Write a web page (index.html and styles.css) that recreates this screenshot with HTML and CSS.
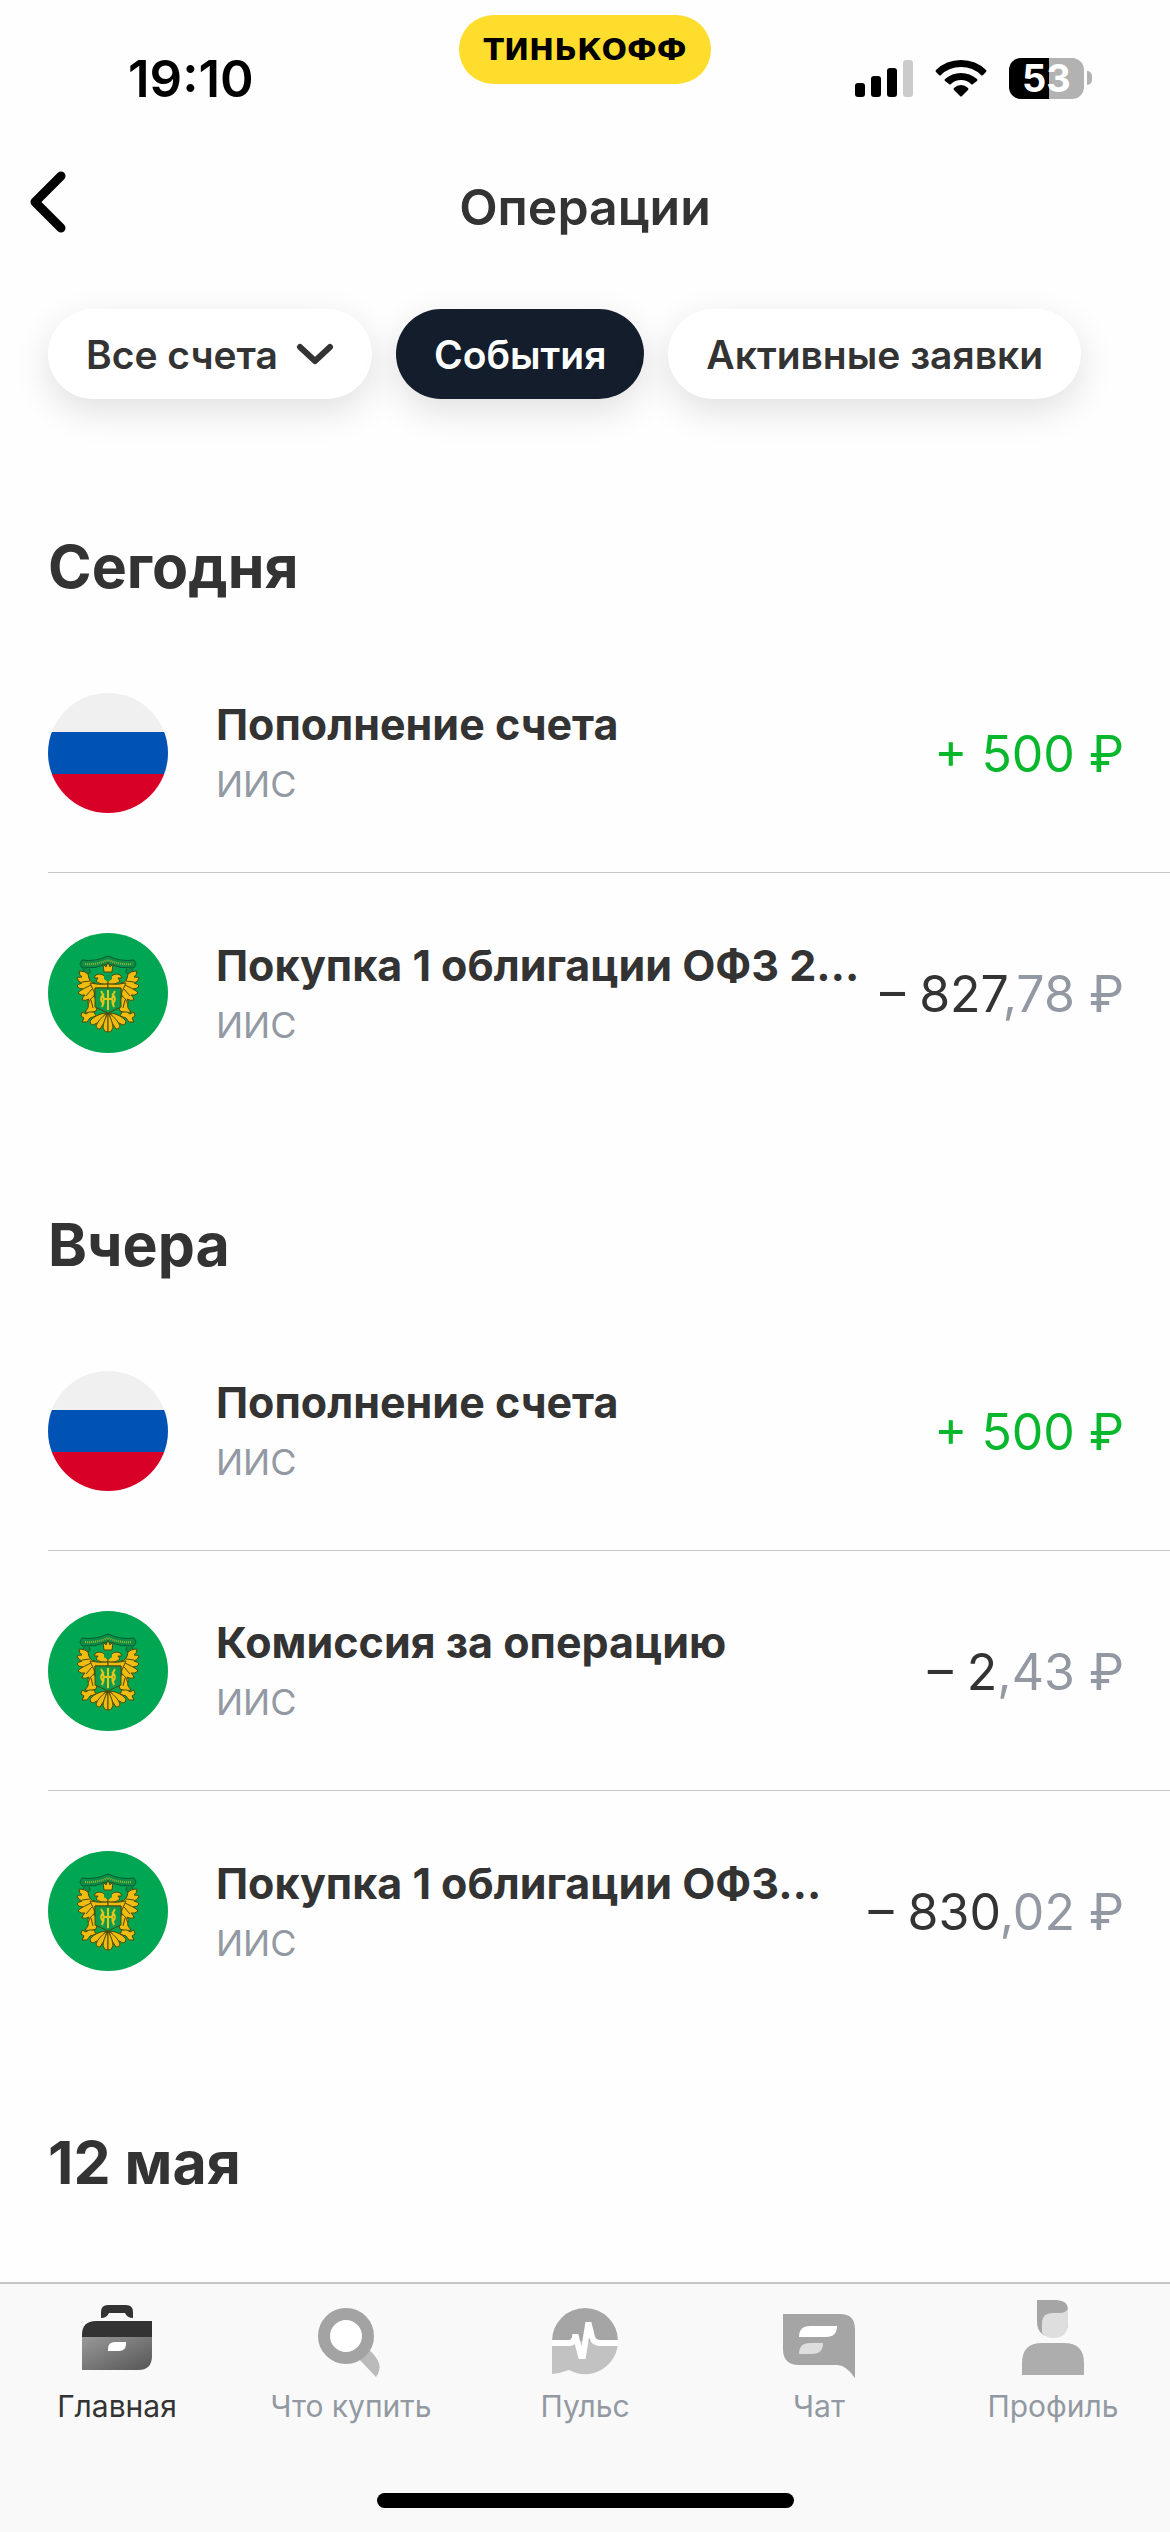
FILE: index.html
```html
<!DOCTYPE html>
<html lang="ru">
  <head>
    <meta charset="UTF-8" />
    <meta name="viewport" content="width=device-width, initial-scale=1.0" />
    <title>Операции</title>
    <link rel="stylesheet" href="styles.css">
  </head>
  <body>
    <svg class="defs" aria-hidden="true">
      <!-- half of the eagle, mirrored inside the emblem -->
      <symbol id="wing" viewBox="0 0 120 120">
        <g fill="#f0bc10" stroke="#4d4a0c" stroke-width="1" stroke-linejoin="round">
          <path d="M60 48q-3-7-9-7q-4 0-5 4l4 0-2 3q4 4 12 3z" />
          <path d="M47 50q-6 0-7-9q-3-3-9-3 0 4 3 6-4 0-5 1 1 4 5 5-4 1-5 3 2 3 6 3-4 2-5 4 3 3 7 2-3 3-3 5 4 1 7-1-2 3-1 5 4-1 6-5z" />
          <path d="M42 50q8 2 18 1v4H47v6z" />
          <path d="M46 63q-6 4-6 12l-3 4q6 2 11-1 3-7-2-15z" />
          <path d="M46 79q-6-1-8 2l-4-2-1 4 3 2-2 4 5 0 3-4 6-2z" />
          <path d="M58 80q-10 1-16 8 0 4 3 4 8-3 13-12z" />
          <path d="M59 80q-9 7-11 13 1 4 4 3 6-7 7-16z" />
          <path d="M60 80q-5 9-5 15 2 5 5 4z" />
        </g>
        <path d="M42 48l-8 1M43 52l-8 4M44 56l-6 7M43 67l2 8" fill="none" stroke="#4d4a0c" stroke-width="1" />
      </symbol>
      <!-- ministry emblem, reused in the bond rows -->
      <symbol id="emblem" viewBox="0 0 120 120">
        <circle cx="60" cy="60" r="60" fill="#00a651" />
        <g fill="#0a8f48" stroke="#0c5a32" stroke-width="1">
          <path d="M34 27q13 2 26-4q13 6 26 4l2 4-2 4q-13 1-26-4q-13 5-26 4l-2-4z" />
          <path d="M36 36q-2 4 3 5q5-1 2-5M84 36q2 4-3 5q-5-1-2-5" />
        </g>
        <path d="M37 31q11 1 23-4q12 5 23 4" fill="none" stroke="#a5b12c" stroke-width="2" stroke-dasharray="1 1" />
        <use href="#wing" width="120" height="120" />
        <use href="#wing" width="120" height="120" transform="matrix(-1 0 0 1 120 0)" />
        <path d="M55 31l3 3 2-5 2 5 3-3-1 8h-8z" fill="#f0bc10" stroke="#4d4a0c" stroke-width="1" />
        <path d="M56 42h8v4l-4 3-4-3z" fill="#0a9b4b" />
        <path d="M47 55h26v19l-13 6-13-6z" fill="#0a9b4b" stroke="#4d4a0c" stroke-width="1" />
        <path d="M53 58q5 7 1 16M67 58q-5 7-1 16M60 57v20M55 66h10M56 61q-6 5 0 10M64 61q6 5 0 10" fill="none" stroke="#e9c51a" stroke-width="2" />
      </symbol>
      <symbol id="flag" viewBox="0 0 120 120">
        <clipPath id="round"><circle cx="60" cy="60" r="60" /></clipPath>
        <g clip-path="url(#round)">
          <path fill="#f0f0f0" d="M0 0h120v39H0z" />
          <path fill="#0052b4" d="M0 39h120v42H0z" />
          <path fill="#d80027" d="M0 81h120v39H0z" />
        </g>
      </symbol>
    </svg>

    <div class="screen">
      <div class="status">
        <span class="time">19:10</span>
        <span class="brand">ТИНЬКОФФ</span>
        <div class="indicators">
          <svg width="58" height="37" viewBox="0 0 58 37">
            <rect x="0" y="23" width="10" height="14" rx="3" />
            <rect x="16" y="16" width="10" height="21" rx="3" />
            <rect x="32" y="8" width="10" height="29" rx="3" />
            <rect x="48" y="0" width="10" height="37" rx="3" fill="#cbcbcb" />
          </svg>
          <svg width="52" height="37" viewBox="0 0 52 37">
            <path d="M1 10Q11 0 26 0T51 10q1 1 0 2l-3 3q-1 1-2 0Q38 7 26 7T6 15q-1 1-2 0l-3-3q-1-1 0-2z" />
            <path d="M10 19q7-6 16-6t16 6q1 1 0 2l-4 3q-1 1-2 0-4-4-10-4t-10 4q-1 1-2 0l-4-3q-1-1 0-2z" />
            <path d="M19 28q3-3 7-3t7 3q1 1 0 2l-6 6q-1 1-2 0l-6-6q-1-1 0-2z" />
          </svg>
          <div class="battery"><span class="level">53</span></div>
        </div>
      </div>

      <header class="topbar">
        <button class="back" aria-label="Назад">
          <svg width="36" height="62" viewBox="0 0 36 62">
            <path d="M31 5L5 31l26 26" fill="none" stroke="#000" stroke-width="9" stroke-linecap="round" stroke-linejoin="round" />
          </svg>
        </button>
        <h1>Операции</h1>
      </header>

      <div class="filters">
        <button class="chip">
          Все счета
          <svg width="38" height="22" viewBox="0 0 38 22">
            <path d="M4 4l15 14L34 4" fill="none" stroke="#333" stroke-width="6" stroke-linecap="round" stroke-linejoin="round" />
          </svg>
        </button>
        <button class="chip active">События</button>
        <button class="chip">Активные заявки</button>
      </div>

      <main class="list">
        <section>
          <h2>Сегодня</h2>
          <ul>
            <li>
              <svg class="avatar"><use href="#flag" /></svg>
              <div class="info">
                <p class="name">Пополнение счета</p>
                <p class="account">ИИС</p>
              </div>
              <span class="sum plus">+ 500 ₽</span>
            </li>
            <li>
              <svg class="avatar"><use href="#emblem" /></svg>
              <div class="info">
                <p class="name">Покупка 1 облигации ОФЗ 2…</p>
                <p class="account">ИИС</p>
              </div>
              <span class="sum">– 827<span class="cents">,78 ₽</span></span>
            </li>
          </ul>
        </section>

        <section>
          <h2>Вчера</h2>
          <ul>
            <li>
              <svg class="avatar"><use href="#flag" /></svg>
              <div class="info">
                <p class="name">Пополнение счета</p>
                <p class="account">ИИС</p>
              </div>
              <span class="sum plus">+ 500 ₽</span>
            </li>
            <li>
              <svg class="avatar"><use href="#emblem" /></svg>
              <div class="info">
                <p class="name">Комиссия за операцию</p>
                <p class="account">ИИС</p>
              </div>
              <span class="sum">– 2<span class="cents">,43 ₽</span></span>
            </li>
            <li>
              <svg class="avatar"><use href="#emblem" /></svg>
              <div class="info">
                <p class="name">Покупка 1 облигации ОФЗ…</p>
                <p class="account">ИИС</p>
              </div>
              <span class="sum">– 830<span class="cents">,02 ₽</span></span>
            </li>
          </ul>
        </section>

        <section>
          <h2>12 мая</h2>
        </section>
      </main>

      <footer class="bottom">
        <nav class="tabs">
          <a class="tab current" href="#">
            <svg class="icon" viewBox="0 0 84 84">
              <defs>
                <linearGradient id="case" x1="0" y1="0" x2="1" y2="1">
                  <stop offset="0" stop-color="#999" />
                  <stop offset="1" stop-color="#555" />
                </linearGradient>
              </defs>
              <path d="M26 22v-6q0-7 7-7h18q7 0 7 7v6q-6 0-8-5H34q-2 5-8 5z" fill="#333" />
              <path d="M7 41v-2Q7 25 21 25h56v16z" fill="#333" />
              <path d="M7 41h70v19q0 14-14 14H7z" fill="url(#case)" />
              <path d="M33 55v-2q0-7 7-7h11v2q0 7-7 7z" fill="#fff" />
            </svg>
            Главная
          </a>
          <a class="tab" href="#">
            <svg class="icon" viewBox="0 0 84 84">
              <path d="M48 61l19 20Q77 68 59 53z" fill="#bbb" />
              <circle cx="37" cy="40" r="22" fill="#fff" stroke="#a3a3a3" stroke-width="12" />
            </svg>
            Что купить
          </a>
          <a class="tab" href="#">
            <svg class="icon" viewBox="0 0 84 84">
              <path d="M9 45a33 33 0 0 1 66 0z" fill="#a5a5a5" />
              <path d="M9 45h66A33 33 0 0 1 26 74q-8 3-17 4z" fill="#c2c2c2" />
              <path d="M9 47h17q5 0 6-6h1l5 19h2l5-31h1l3 12q2 6 8 6h18" fill="none" stroke="#fff" stroke-width="6" />
            </svg>
            Пульс
          </a>
          <a class="tab" href="#">
            <svg class="icon" viewBox="0 0 84 84">
              <path d="M6 18h57q15 0 15 15v49Q69 69 60 69H22Q6 69 6 53z" fill="#a5a5a5" />
              <path d="M22 41q0-11 11-11h27q0 11-11 11z" fill="#fff" />
              <path d="M22 58q0-11 11-11h13q0 11-11 11z" fill="#dedede" />
            </svg>
            Чат
          </a>
          <a class="tab" href="#">
            <svg class="icon" viewBox="0 0 84 84">
              <path d="M26 4h20q11 1 11 9v13q0 15-15 15-16 0-16-16z" fill="#a5a5a5" />
              <path d="M31 37V27q0-10 11-10h6q8 0 9-5v15q0 15-15 15-7 0-11-5z" fill="#dedede" />
              <path d="M11 79V67q0-20 20-20h22q20 0 20 20v12z" fill="#adadad" />
            </svg>
            Профиль
          </a>
        </nav>
        <div class="homebar"></div>
      </footer>
    </div>
  </body>
</html>
```
FILE: styles.css
```css
* {
  margin: 0;
  padding: 0;
  box-sizing: border-box;
}
body {
  font-family: Inter, "Liberation Sans", sans-serif;
  color: #333;
  background-color: #fefefe;
}
button {
  font: inherit;
  color: inherit;
  border: none;
  background: none;
}
.defs {
  position: absolute;
  width: 0;
  height: 0;
}
.screen {
  display: flex;
  flex-direction: column;
  min-height: 100vh;
}
.status {
  display: grid;
  grid-template-columns: 1fr auto 1fr;
  align-items: center;
  height: 156px;
  padding: 0 78px;
  color: #000;
}
.time {
  padding-left: 50px;
  font-size: 51px;
  font-weight: 600;
}
.brand {
  align-self: start;
  margin-top: 15px;
  padding: 0 24px;
  border-radius: 35px;
  background-color: #ffdd2d;
  font-family: "DejaVu Sans", sans-serif;
  font-size: 30px;
  font-weight: bold;
  line-height: 69px;
}
.indicators {
  display: flex;
  align-items: center;
  justify-content: flex-end;
  gap: 22px;
}
.battery {
  display: flex;
  align-items: center;
  gap: 3px;
}
.battery::after {
  content: "";
  width: 5px;
  height: 14px;
  border-radius: 0 6px 6px 0;
  background-color: #b2b2b2;
}
.level {
  width: 75px;
  height: 41px;
  border-radius: 12px;
  background: linear-gradient(to right, #000 53%, #b2b2b2 53%);
  color: #fff;
  font-size: 38px;
  font-weight: 700;
  line-height: 41px;
  text-align: center;
}
.topbar {
  display: grid;
  grid-template-columns: 1fr auto 1fr;
  align-items: center;
  height: 102px;
  padding: 0 30px;
}
.back {
  justify-self: start;
  height: 72px;
  padding-bottom: 6px;
}
h1 {
  font-size: 50px;
  font-weight: 600;
}
.filters {
  display: flex;
  gap: 24px;
  padding: 51px 48px 36px;
}
.chip {
  display: flex;
  align-items: center;
  gap: 18px;
  height: 90px;
  padding: 0 38px;
  border-radius: 45px;
  background-color: #fff;
  box-shadow: 0 12px 36px rgba(0, 0, 0, 0.12);
  font-size: 39px;
  font-weight: 600;
  white-space: nowrap;
}
.chip.active {
  background-color: #141d2b;
  color: #fff;
}
.list {
  flex: 1;
}
h2 {
  padding: 96px 48px 30px;
  font-size: 59px;
  font-weight: 700;
  line-height: 72px;
}
ul {
  list-style: none;
  padding-left: 48px;
}
li {
  display: flex;
  align-items: center;
  height: 240px;
  padding-right: 46px;
}
li:not(:last-child) {
  border-bottom: 1px solid #c8c8c8;
}
.avatar {
  flex: none;
  width: 120px;
  height: 120px;
  margin-right: 48px;
}
.info {
  flex: 1;
  min-width: 0;
  padding-top: 3px;
  white-space: nowrap;
}
.name {
  font-size: 43px;
  font-weight: 700;
  line-height: 60px;
}
.account {
  font-size: 36px;
  line-height: 60px;
  color: #9299a2;
}
.sum {
  padding-top: 2px;
  font-size: 50px;
  white-space: nowrap;
}
.plus {
  color: #09b72d;
}
.cents {
  color: #9299a2;
}
.bottom {
  border-top: 2px solid #c6c6c6;
  background-color: #f9f9f9;
}
.tabs {
  display: grid;
  grid-template-columns: repeat(5, 1fr);
  padding-top: 12px;
}
.tab {
  display: flex;
  flex-direction: column;
  align-items: center;
  gap: 8px;
  color: #9299a2;
  font-size: 30px;
  line-height: 36px;
  text-decoration: none;
}
.tab.current {
  color: #333;
}
.icon {
  width: 84px;
  height: 84px;
}
.homebar {
  width: 417px;
  height: 15px;
  margin: 69px auto 24px;
  border-radius: 8px;
  background-color: #000;
}
```
